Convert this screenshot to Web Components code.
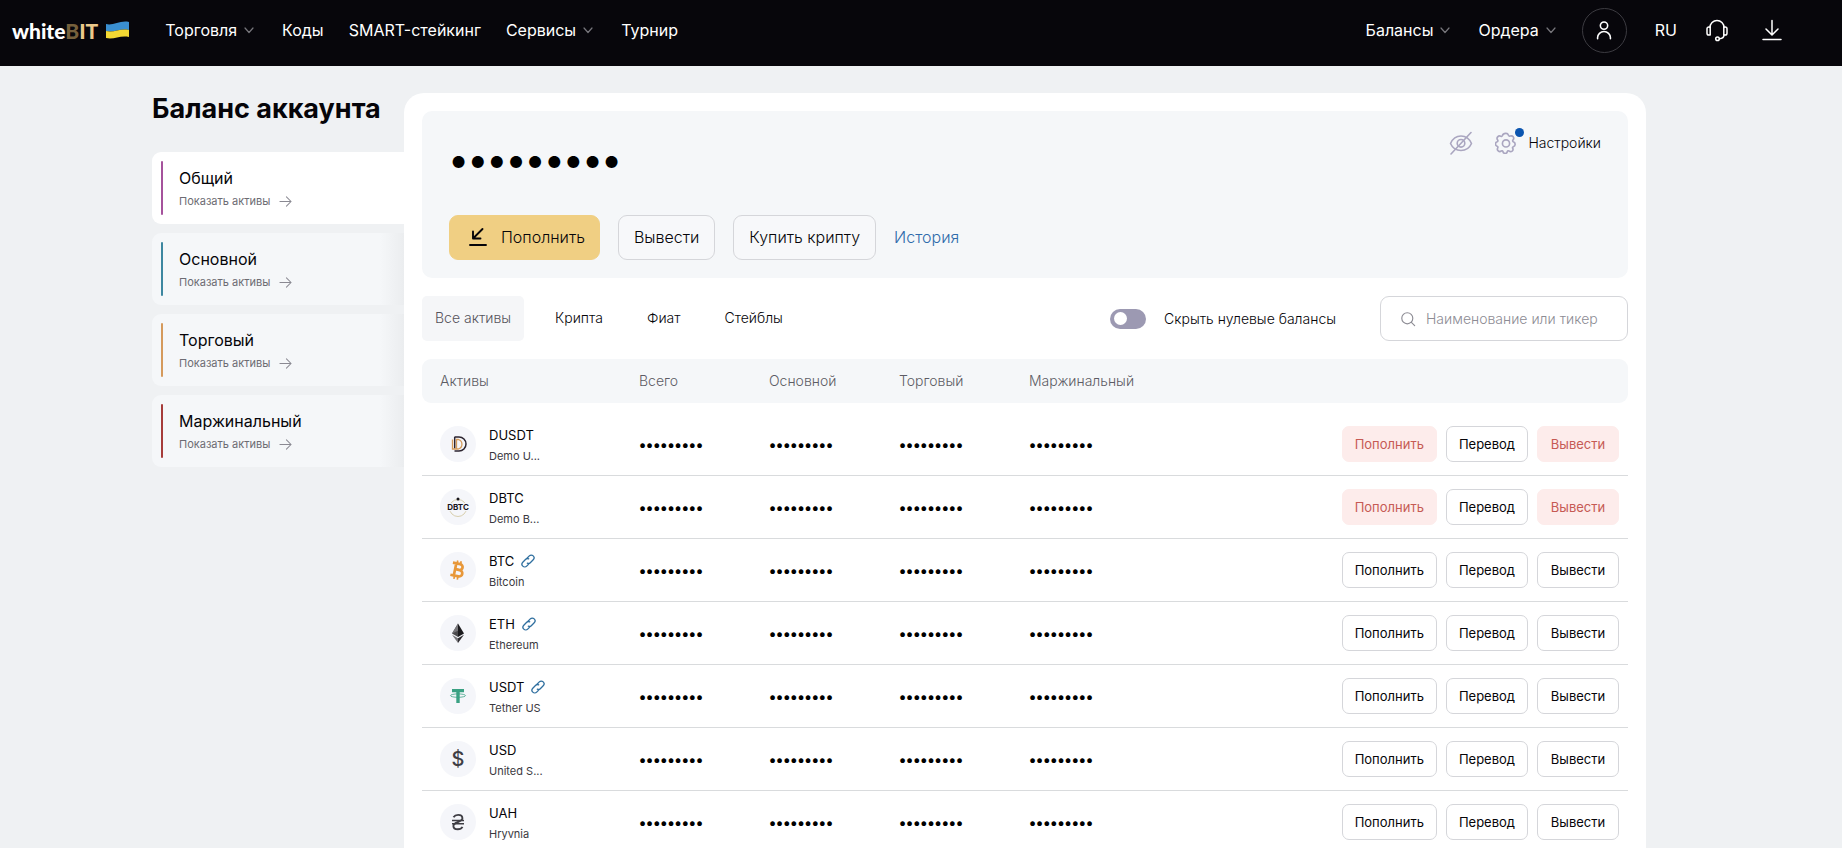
<!DOCTYPE html>
<html lang="ru">
<head>
<meta charset="utf-8">
<title>WhiteBIT — Баланс аккаунта</title>
<style>
  body { margin: 0; background: #eff1f3; color: #060509; font: 400 14px Inter, "Liberation Sans", sans-serif; }
</style>
</head>
<body>
<wb-app>
  <wb-header slot="header"></wb-header>
  <wb-wallet-card slot="wallets" active color="#a5529c" label="Общий"></wb-wallet-card>
  <wb-wallet-card slot="wallets" color="#3d87a0" label="Основной"></wb-wallet-card>
  <wb-wallet-card slot="wallets" color="#d59a5c" label="Торговый"></wb-wallet-card>
  <wb-wallet-card slot="wallets" color="#a63c3a" label="Маржинальный"></wb-wallet-card>
  <wb-summary></wb-summary>
  <wb-toolbar></wb-toolbar>
  <wb-asset-table></wb-asset-table>
</wb-app>

<script>
const define = (name, render) => customElements.define(name, class extends HTMLElement {
  connectedCallback() {
    if (this.shadowRoot) return;
    const t = document.createElement('template');
    t.innerHTML = `<style>:host,*{box-sizing:border-box}a{color:inherit;text-decoration:none}button{font:inherit;color:inherit;cursor:pointer}</style>` + render(this);
    this.attachShadow({ mode: 'open' }).append(t.content.cloneNode(true));
  }
});

const line = (d, extra = '') => `<g fill="none" stroke="currentColor" stroke-width="1.5" stroke-linecap="round" stroke-linejoin="round" ${extra}>${d}</g>`;
const icons = {
  chevron: [16, line('<path d="M4 6l4 4.5L12 6"/>', 'style="stroke-width:1.2"')],
  user: [24, line('<circle cx="12" cy="7.2" r="4"/><path d="M5 21.5v-1.2a7 6.6 0 0 1 14 0v1.2"/>', 'style="stroke-width:1.7"')],
  headset: [24, line('<path d="M5 9.5a7 7 0 0 1 14 0"/><path d="M5.2 9H3.8a1.8 1.8 0 0 0-1.8 1.8v4.4A1.8 1.8 0 0 0 3.800 17h1.400zM18.800 9h1.400a1.800 1.800 0 0 1 1.800 1.800v4.400a1.800 1.800 0 0 1-1.800 1.800h-1.400z"/><path d="M19 17c0 2-2 3.500-4.500 3.700"/><circle cx="12.500" cy="20.700" r="1.800"/>', 'style="stroke-width:1.5"')],
  download: [24, line('<path d="M12 2.500v14M6 11l6 6 6-6M3 21.500h18"/>', 'style="stroke-width:1.5"')],
  arrow: [14, line('<path d="M1 7h12M8 2l5 5-5 5"/>', 'style="stroke-width:1.1"')],
  deposit: [20, line('<path d="M14.500 2L5.500 11M5 4.500V11.500h7.500M2 18h16"/>', 'style="stroke-width:1.900"')],
  hidden: [24, line('<path d="M1.500 12.500C3.500 8 7.500 5 12 5s8.500 3 10.500 7.500C20.500 17 16.500 19.500 12 19.500S3.500 17 1.500 12.500z"/><circle cx="12" cy="12.300" r="3.800"/><path d="M22 1.500L2 23"/>', 'style="stroke-width:1.600"')],
  gear: [24, line('<path d="M12 1.5c1.600 0 2.300.9 2.700 2.100.3.800 1.100 1.100 1.900.8 1.200-.5 2.400-.3 3.300.9.900 1.300.6 2.500-.3 3.500-.5.700-.4 1.500.4 1.900 1.200.5 2 1.200 2 2.700s-.8 2.200-2 2.600c-.8.300-1.100 1-.7 1.700.6 1.200.5 2.300-.6 3.200-1.200.9-2.400.7-3.500-.2-.7-.5-1.500-.2-1.700.6-.3 1.300-.9 2.100-2.400 2.100s-2.200-.8-2.500-2.100c-.2-.8-1-1.100-1.700-.6-1.100.8-2.300.9-3.400-.1-1.100-1-1.200-2.100-.5-3.300.4-.7.100-1.400-.7-1.700-1.100-.4-1.800-1.200-1.800-2.500s.7-2.100 1.900-2.500c.8-.3 1-1.100.5-1.900-.8-1-1-2.200 0-3.400 1-1.100 2.200-1.300 3.400-.7.800.3 1.500 0 1.800-.8.400-1.300 1.300-2.300 3.400-2.300z"/><circle cx="12" cy="12.500" r="3.900"/>', 'style="stroke-width:1.800"')],
  search: [18, line('<circle cx="8.200" cy="8.200" r="6.200"/><path d="M12.800 12.800L16.500 16.500"/>', 'style="stroke-width:1.300"')],
  link: [14, line('<path d="M6 4.200L8.300 1.900a2.700 2.700 0 0 1 3.900 3.900L9.300 8.700a2.700 2.700 0 0 1-3 .5M8 9.800L5.700 12.100A2.700 2.700 0 0 1 1.800 8.200L4.700 5.300a2.700 2.700 0 0 1 3-.5"/>', 'style="stroke-width:1.300"')],
};
define('wb-icon', el => {
  const [box, body] = icons[el.getAttribute('name')];
  const size = el.getAttribute('size') || box;
  return `<style>:host{display:inline-flex;flex:none}svg{display:block}</style>
  <svg width="${size}" height="${size}" viewBox="0 0 ${box} ${box}" aria-hidden="true">${body}</svg>`;
});

const coins = {
  DUSDT: '<g fill="none" stroke-width="1.300"><path d="M14.500 11h4.500a7 7 0 0 1 0 14h-4.500" stroke="#2c2530" stroke-width="1.500"/><path d="M14.700 11v11.500" stroke="#2c2530" stroke-width="1.500"/><path d="M12.500 13.500v9.500h6a5 5 0 0 0 0-9.500h-2v9" stroke="#d59c5c"/></g>',
  DBTC: '<circle cx="18" cy="19" r="8.500" fill="none" stroke="#d8cfae"/><path d="M6 14h24v8H6z" fill="#f5f6fa"/><circle cx="18" cy="10" r="1.500" fill="#17151c"/><text x="18" y="20.500" text-anchor="middle" font-size="8" font-weight="700" fill="#17151c">DBTC</text>',
  BTC: '<g transform="rotate(12 18 18)" fill="none" stroke="#e8983a" stroke-width="2.700"><path d="M15 11.800v12.400M11.500 11.800h7.500a2.900 2.900 0 0 1 0 5.900H15.500h4.200a3.200 3.200 0 0 1 0 6.500H11.500"/><path d="M15.800 8.800v3M19.300 8.800v3M15.800 24.500v3M19.300 24.500v3" stroke-width="1.700"/></g>',
  ETH: '<path d="M18 8.500l-6 10 6 3.600z" fill="#4b4a4d"/><path d="M18 8.500l6 10-6 3.600z" fill="#1c1b1e"/><path d="M18 8.500v7.300l-6 2.700z" fill="#77767a"/><path d="M12 19.800l6 3.500v4.700z" fill="#77767a"/><path d="M24 19.800l-6 3.500v4.700z" fill="#2d2c30"/>',
  USDT: '<path d="M12 11h12v3.200h-4.300V25h-3.400V14.200H12z" fill="#3aa183"/><ellipse cx="18" cy="17.600" rx="7.500" ry="1.700" fill="none" stroke="#3aa183" stroke-width=".8"/>',
  USD: '<text x="18" y="25" text-anchor="middle" font-size="20" font-weight="500" fill="#3f3e44">$</text>',
  UAH: '<g fill="none" stroke="#3f3e44" stroke-width="1.900"><path d="M13.500 13.200c1-1.600 2.500-2.300 4.600-2.300 2.700 0 4.300 1.300 4.300 3.400 0 4.200-9 3.200-9 7.700 0 2 1.700 3.300 4.400 3.300 2.200 0 3.800-.8 4.700-2.400"/><path d="M12 16.600h12M12 19.700h12" stroke-width="1.500"/></g>',
};
define('wb-coin', el => `<style>:host{display:block;width:36px;height:36px;flex:none}svg{display:block;font-family:Inter,sans-serif}</style>
  <svg width="36" height="36" viewBox="0 0 36 36" aria-hidden="true"><circle cx="18" cy="18" r="18" fill="#f5f6fa"/>${coins[el.getAttribute('code')]}</svg>`);

define('wb-app', () => `
<style>
  :host { display: block; height: 100vh; overflow: hidden; }
  .page { display: grid; grid-template-columns: 252px minmax(0, 1fr); max-width: 1494px; margin: 27px auto 0; }
  .outer { padding-right: 44px; }
  h1 { margin: 0 0 27px; font-size: 27px; font-weight: 700; line-height: 32px; white-space: nowrap; }
  nav { display: flex; flex-direction: column; gap: 9px; }
  main { display: flex; flex-direction: column; gap: 18px; background: #fff; border-radius: 20px; padding: 18px; min-height: 100vh; }
</style>
<slot name="header"></slot>
<div class="outer"><div class="page">
  <aside><h1>Баланс аккаунта</h1><nav aria-label="Кошельки"><slot name="wallets"></slot></nav></aside>
  <main><slot></slot></main>
</div></div>`);

define('wb-header', () => `
<style>
  :host { display: flex; justify-content: space-between; height: 66px; padding: 0 55px 6px 12px; background: #07060b; color: #fff; font-size: 16px; }
  div, nav, nav a { display: flex; align-items: center; }
  nav { gap: 25px; }
  .left { gap: 36px; }
  nav a { gap: 4px; }
  nav wb-icon[name=chevron] { color: #77767c; }
  .logo { display: flex; align-items: center; gap: 8px; font: 900 21px Lato, sans-serif; }
  .logo b { color: #ecc98a; }
  .logo i { font-style: normal; color: #76603c; }
  .user { width: 45px; height: 45px; border: 1px solid #3c3b41; border-radius: 50%; justify-content: center; margin: 0 3px 0 -2px; }
  .tool { width: 30px; justify-content: center; }
</style>
<div class="left">
  <a class="logo" href="#"><span>white<b><i>B</i>IT</b></span>
    <svg width="23" height="18" viewBox="0 0 23 18" aria-hidden="true"><path d="M0 3C7 5 14-1 23 1V9C14 7 8 12 0 10z" fill="#3a8fd0"/><path d="M0 10c8 2 14-3 23-1v7c-9-2-15 3-23 1z" fill="#f3d833"/></svg></a>
  <nav aria-label="Основное меню">
    <a href="#">Торговля<wb-icon name="chevron"></wb-icon></a>
    <a href="#">Коды</a>
    <a href="#">SMART-стейкинг</a>
    <a href="#">Сервисы<wb-icon name="chevron"></wb-icon></a>
    <a href="#">Турнир</a>
  </nav>
</div>
<nav aria-label="Аккаунт">
  <a href="#">Балансы<wb-icon name="chevron"></wb-icon></a>
  <a href="#">Ордера<wb-icon name="chevron"></wb-icon></a>
  <a href="#" class="user" aria-label="Профиль"><wb-icon name="user" size="22"></wb-icon></a>
  <a href="#">RU</a>
  <a href="#" class="tool" aria-label="Поддержка"><wb-icon name="headset"></wb-icon></a>
  <a href="#" class="tool" aria-label="Скачать приложение"><wb-icon name="download"></wb-icon></a>
</nav>`);

define('wb-wallet-card', el => `
<style>
  :host { display: block; height: 72px; border-radius: 9px 0 0 9px; background: linear-gradient(to left, #ebedef, #f5f7f9 24px); }
  :host([active]) { background: #fff; }
  a { display: flex; gap: 16px; height: 100%; padding: 9px; }
  .bar { width: 2px; border-radius: 1px; background: ${el.getAttribute('color')}; }
  .text { display: flex; flex-direction: column; gap: 6px; padding-top: 7px; }
  .name { font-size: 16px; line-height: 20px; }
  .more { display: flex; align-items: center; gap: 9px; font-size: 11px; line-height: 14px; color: #6d6c73; }
  wb-icon { color: #8a8992; }
</style>
<a href="#"><span class="bar"></span><span class="text"><span class="name">${el.getAttribute('label')}</span>
<span class="more">Показать активы<wb-icon name="arrow" size="13"></wb-icon></span></span></a>`);

define('wb-summary', () => `
<style>
  :host { display: flex; flex-direction: column; gap: 23px; padding: 18px 27px; border-radius: 10px; background: #f5f7f9; }
  .top { display: flex; justify-content: space-between; height: 63px; }
  .total { font: 600 38px/60px Inter, sans-serif; color: #000; }
  .tools { display: flex; align-items: center; gap: 22px; height: 27px; font-weight: 300; }
  .tools button { display: flex; align-items: center; gap: 11px; padding: 0; border: 0; background: none; }
  .tools wb-icon { color: #aaa6c0; }
  .gear { position: relative; display: flex; }
  .gear::after { content: ""; position: absolute; top: -4px; right: -7px; width: 9px; height: 9px; border-radius: 50%; background: #0b55b0; }
  .actions { display: flex; align-items: center; gap: 18px; font-size: 16px; font-weight: 300; }
  .actions button { display: flex; align-items: center; gap: 13px; height: 45px; padding: 0 15px 2px; border: 1px solid #d5d6da; border-radius: 9px; background: #f7f8fa; }
  .actions .primary { background: #f0cf83; border-color: #f0cf83; padding-left: 18px; padding-right: 14px; }
  .actions a { padding-bottom: 2px; color: #2f6bab; }
</style>
<div class="top">
  <div class="total">•••••••••</div>
  <div class="tools">
    <button type="button" aria-label="Показать баланс"><wb-icon name="hidden"></wb-icon></button>
    <button type="button"><span class="gear"><wb-icon name="gear" size="22"></wb-icon></span>Настройки</button>
  </div>
</div>
<div class="actions">
  <button type="button" class="primary"><wb-icon name="deposit"></wb-icon>Пополнить</button>
  <button type="button">Вывести</button>
  <button type="button">Купить крипту</button>
  <a href="#">История</a>
</div>`);

define('wb-toolbar', () => `
<style>
  :host { display: flex; justify-content: space-between; font-weight: 300; }
  div { display: flex; align-items: center; }
  .tabs { gap: 18px; }
  .tabs button { height: 45px; padding: 0 13px 2px; border: 0; border-radius: 5px; background: none; }
  .tabs button[aria-selected=true] { background: #f5f6f8; color: #55545b; }
  .right { gap: 44px; }
  .switch { display: flex; align-items: center; gap: 18px; }
  .switch input { appearance: none; display: flex; align-items: center; width: 36px; height: 20px; margin: 0; padding: 0 4px; border-radius: 10px; background: #9c99b2; }
  .switch input::before { content: ""; width: 13px; height: 13px; border-radius: 50%; background: #fff; }
  .search { display: flex; align-items: center; gap: 10px; width: 248px; height: 45px; padding: 0 19px; border: 1px solid #d5d6da; border-radius: 9px; color: #8d8c94; }
  .search input { flex: 1; min-width: 0; padding: 0; border: 0; outline: 0; background: none; font: inherit; }
  .search input::placeholder { color: #8d8c94; opacity: 1; }
</style>
<div class="tabs" role="tablist">
  <button type="button" role="tab" aria-selected="true">Все активы</button>
  <button type="button" role="tab" aria-selected="false">Крипта</button>
  <button type="button" role="tab" aria-selected="false">Фиат</button>
  <button type="button" role="tab" aria-selected="false">Стейблы</button>
</div>
<div class="right">
  <label class="switch"><input type="checkbox" role="switch">Скрыть нулевые балансы</label>
  <label class="search"><wb-icon name="search" size="16"></wb-icon><input type="text" placeholder="Наименование или тикер" aria-label="Наименование или тикер"></label>
</div>`);

const assets = [
  ['DUSDT', 'Demo U...', false, true],
  ['DBTC', 'Demo B...', false, true],
  ['BTC', 'Bitcoin', true, false],
  ['ETH', 'Ethereum', true, false],
  ['USDT', 'Tether US', true, false],
  ['USD', 'United S...', false, false],
  ['UAH', 'Hryvnia', false, false],
];
const row = ([code, name, linked, off]) => `
<tr>
  <td><div class="asset"><wb-coin code="${code}"></wb-coin><div><div class="code">${code}${linked ? '<a href="#" aria-label="Обозреватель"><wb-icon name="link"></wb-icon></a>' : ''}</div><div class="name">${name}</div></div></div></td>
  ${'<td class="sum">•••••••••</td>'.repeat(4)}
  <td><div class="actions"><button type="button" ${off ? 'class="off"' : ''}>Пополнить</button><button type="button">Перевод</button><button type="button" ${off ? 'class="off"' : ''}>Вывести</button></div></td>
</tr>`;
define('wb-asset-table', () => `
<style>
  :host { display: block; }
  table { width: 100%; table-layout: fixed; border-collapse: separate; border-spacing: 0; }
  .c1 { width: 217px; } .c2 { width: 130px; }
  th { height: 44px; padding: 0 0 2px; background: #f5f7f9; text-align: left; font-weight: 300; color: #5d5c64; white-space: nowrap; }
  th:first-child { padding-left: 18px; border-radius: 9px 0 0 9px; }
  th:last-child { border-radius: 0 9px 9px 0; }
  tbody::before { content: ""; display: block; height: 10px; }
  td { height: 63px; padding: 0; border-bottom: 1px solid #d9dbdd; }
  td:first-child { padding-left: 18px; }
  .asset { display: flex; align-items: center; gap: 13px; }
  .code { display: flex; align-items: center; gap: 7px; padding-top: 2px; font-size: 13px; line-height: 18px; }
  .code a { display: flex; color: #2f6f9f; }
  .name { padding-top: 4px; font-size: 11px; line-height: 16px; color: #3a3940; }
  .sum { font-size: 15px; font-weight: 700; color: #000; }
  .actions { display: flex; justify-content: flex-end; gap: 9px; padding-right: 9px; font-size: 13px; }
  .actions button { min-width: 82px; height: 36px; padding: 0 12px; border: 1px solid #d5d6da; border-radius: 7px; background: #fff; }
  .actions .off { border-color: #fdeceb; background: #fdeceb; color: #c65a54; }
</style>
<table>
  <colgroup><col class="c1"><col class="c2"><col class="c2"><col class="c2"><col class="c2"><col></colgroup>
  <thead><tr><th>Активы</th><th>Всего</th><th>Основной</th><th>Торговый</th><th>Маржинальный</th><th aria-label="Действия"></th></tr></thead>
  <tbody>${assets.map(row).join('')}</tbody>
</table>`);
</script>
</body>
</html>
